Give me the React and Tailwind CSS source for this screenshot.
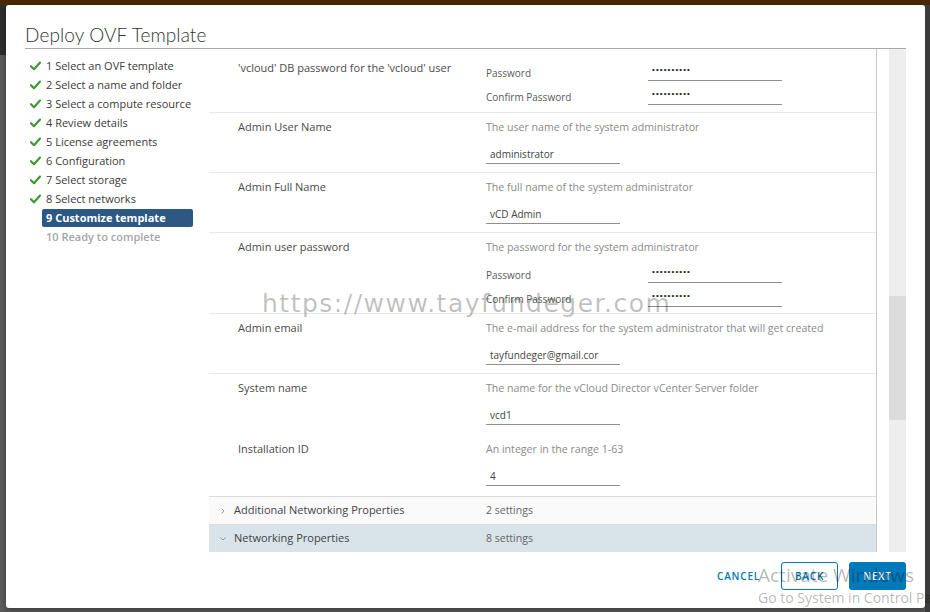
import React from 'react';

const steps = [
  { n: 1, label: 'Select an OVF template', done: true },
  { n: 2, label: 'Select a name and folder', done: true },
  { n: 3, label: 'Select a compute resource', done: true },
  { n: 4, label: 'Review details', done: true },
  { n: 5, label: 'License agreements', done: true },
  { n: 6, label: 'Configuration', done: true },
  { n: 7, label: 'Select storage', done: true },
  { n: 8, label: 'Select networks', done: true },
  { n: 9, label: 'Customize template', active: true },
  { n: 10, label: 'Ready to complete', disabled: true },
];

const Check = () => (
  <svg width="11" height="10" viewBox="0 0 11 10" className="shrink-0">
    <path d="M1 5.2 L4 8.2 L10 1.6" fill="none" stroke="#3c9a2f" strokeWidth="2.2" strokeLinecap="round" strokeLinejoin="round" />
  </svg>
);

const Chevron = ({ open }) => (
  <svg width="8" height="8" viewBox="0 0 8 8" className="shrink-0">
    {open ? (
      <path d="M1.5 2.5 L4 5 L6.5 2.5" fill="none" stroke="#999" strokeWidth="1" />
    ) : (
      <path d="M2.5 1.5 L5 4 L2.5 6.5" fill="none" stroke="#999" strokeWidth="1" />
    )}
  </svg>
);

const Field = ({ value }) => (
  <div className="w-[134px] h-[20px] border-b border-[#8f8f8f] pl-[4px] text-[10px] leading-[20px] text-[#444] overflow-hidden whitespace-nowrap">
    {value}
  </div>
);

const Dots = () => (
  <div className="w-[134px] h-[20px] border-b border-[#8f8f8f] pl-[4px] font-['Liberation_Sans',Arial,sans-serif] text-[8px] leading-[18px] tracking-[1.1px] text-[#222]">
    ••••••••••
  </div>
);

const PwRow = ({ label, className = '' }) => (
  <div className={`flex items-end h-[20px] ${className}`}>
    <div className="w-[162px] pb-[1px] leading-[14px] text-[10px] text-[#595959]">{label}</div>
    <Dots />
  </div>
);

const Row = ({ label, desc, children, pt = 'pt-[7px]', pb = 'pb-[8px]', border = true }) => (
  <div className={`flex ${border ? 'border-b border-[#e8e8e8]' : ''}`}>
    <div className={`w-[277px] shrink-0 pl-[29px] ${pt} leading-[14px] text-[#4a4a4a]`}>{label}</div>
    <div className={`flex-1 ${pt} ${pb}`}>
      {desc && <div className="leading-[14px] text-[10.6px] text-[#8a8a8a]">{desc}</div>}
      {children}
    </div>
  </div>
);

export default function App() {
  return (
    <div className="w-[930px] h-[612px] overflow-hidden relative bg-[#5c5c5c] font-['Open_Sans',sans-serif] text-[11px]">
      <div className="h-[5px] bg-[#4b2807]" />
      <div className="flex">
        <div className="w-[6px] h-[50px] bg-[#2e2e2e]" />
        <div className="w-[919px] h-[603px] bg-white rounded-[3px] shadow-[0_2px_6px_rgba(0,0,0,0.4)] flex flex-col">
          <div className="h-[44px] mx-[19px] pt-[19px] border-b border-[#a9a9a9]">
            <div className="font-['Lato',sans-serif] font-light text-[19px] leading-[22px] text-[#333] tracking-[0.1px]">
              Deploy OVF Template
            </div>
          </div>

          <div className="flex h-[503px]">
            <div className="w-[184px] ml-[19px] pt-[7px]">
              {steps.map((s) => (
                <div key={s.n} className="flex items-center h-[19px] pl-[5px]">
                  <div className="w-[12px] shrink-0">{s.done && <Check />}</div>
                  <div
                    className={`px-[4px] h-[18px] leading-[18px] rounded-[2px] whitespace-nowrap ${
                      s.active
                        ? 'w-[151px] bg-[#2c5883] text-white font-bold'
                        : s.disabled
                        ? 'text-[#a6a6a6] font-semibold'
                        : 'text-[#3a3a3a]'
                    }`}
                  >
                    {s.n} {s.label}
                  </div>
                </div>
              ))}
            </div>

            <div className="w-[668px] border-r border-[#c8c8c8] overflow-hidden">
              <Row label="'vcloud' DB password for the 'vcloud' user" pt="pt-[12px]" pb="pb-[7px]">
                <PwRow label="Password" />
                <PwRow label="Confirm Password" className="mt-[4px]" />
              </Row>
              <Row label="Admin User Name" desc="The user name of the system administrator">
                <div className="mt-[10px]"><Field value="administrator" /></div>
              </Row>
              <Row label="Admin Full Name" desc="The full name of the system administrator">
                <div className="mt-[10px]"><Field value="vCD Admin" /></div>
              </Row>
              <Row label="Admin user password" desc="The password for the system administrator" pb="pb-[6px]">
                <PwRow label="Password" className="mt-[9px]" />
                <PwRow label="Confirm Password" className="mt-[4px]" />
              </Row>
              <Row label="Admin email" desc="The e-mail address for the system administrator that will get created">
                <div className="mt-[10px]"><Field value="tayfundeger@gmail.cor" /></div>
              </Row>
              <Row label="System name" desc="The name for the vCloud Director vCenter Server folder" border={false} pb="pb-[10px]">
                <div className="mt-[10px]"><Field value="vcd1" /></div>
              </Row>
              <Row label="Installation ID" desc="An integer in the range 1-63" border={false} pb="pb-[10px]">
                <div className="mt-[10px]"><Field value="4" /></div>
              </Row>

              <div className="flex items-center h-[29px] bg-[#fafafa] border-t border-b border-[#dcdcdc] text-[#444]">
                <div className="w-[277px] flex items-center pl-[10px]">
                  <Chevron />
                  <span className="ml-[7px]">Additional Networking Properties</span>
                </div>
                <div className="text-[10.5px] text-[#666]">2 settings</div>
              </div>
              <div className="flex items-center h-[27px] bg-[#d9e3ea] text-[#444]">
                <div className="w-[277px] flex items-center pl-[10px]">
                  <Chevron open />
                  <span className="ml-[7px]">Networking Properties</span>
                </div>
                <div className="text-[10.5px] text-[#666]">8 settings</div>
              </div>
            </div>

            <div className="w-[17px] ml-[12px] bg-[#eeeeee] flex flex-col">
              <div className="h-[247px]" />
              <div className="h-[124px] bg-[#dcdcdc]" />
            </div>
          </div>

          <div className="flex justify-end items-start pt-[10px] pr-[19px]">
            <button className="h-[28px] mr-[21px] text-[10px] tracking-[0.8px] text-[#0079b8] font-semibold">CANCEL</button>
            <button className="w-[57px] h-[28px] mr-[11px] border border-[#0079b8] rounded-[3px] text-[10px] tracking-[0.8px] text-[#0079b8] font-semibold">
              BACK
            </button>
            <button className="w-[57px] h-[28px] bg-[#0079b8] rounded-[3px] text-[10px] tracking-[0.8px] text-white font-semibold">
              NEXT
            </button>
          </div>
        </div>
        <div className="w-[5px] h-[607px] bg-[#3b3b3b]" />
      </div>

      <div className="absolute left-[262px] top-[289px] font-['DejaVu_Sans',sans-serif] text-[25px] leading-[30px] tracking-[1.5px] text-black/25 whitespace-nowrap pointer-events-none">
        https://www.tayfundeger.com
      </div>
      <div className="absolute left-[758px] top-[562px] font-['Open_Sans',sans-serif] text-[19px] leading-[26px] text-black/30 whitespace-nowrap pointer-events-none">
        Activate Windows
      </div>
      <div className="absolute left-[758px] top-[588px] font-['Open_Sans',sans-serif] text-[14px] leading-[20px] text-black/30 whitespace-nowrap pointer-events-none">
        Go to System in Control Panel to activate Windows.
      </div>
    </div>
  );
}
